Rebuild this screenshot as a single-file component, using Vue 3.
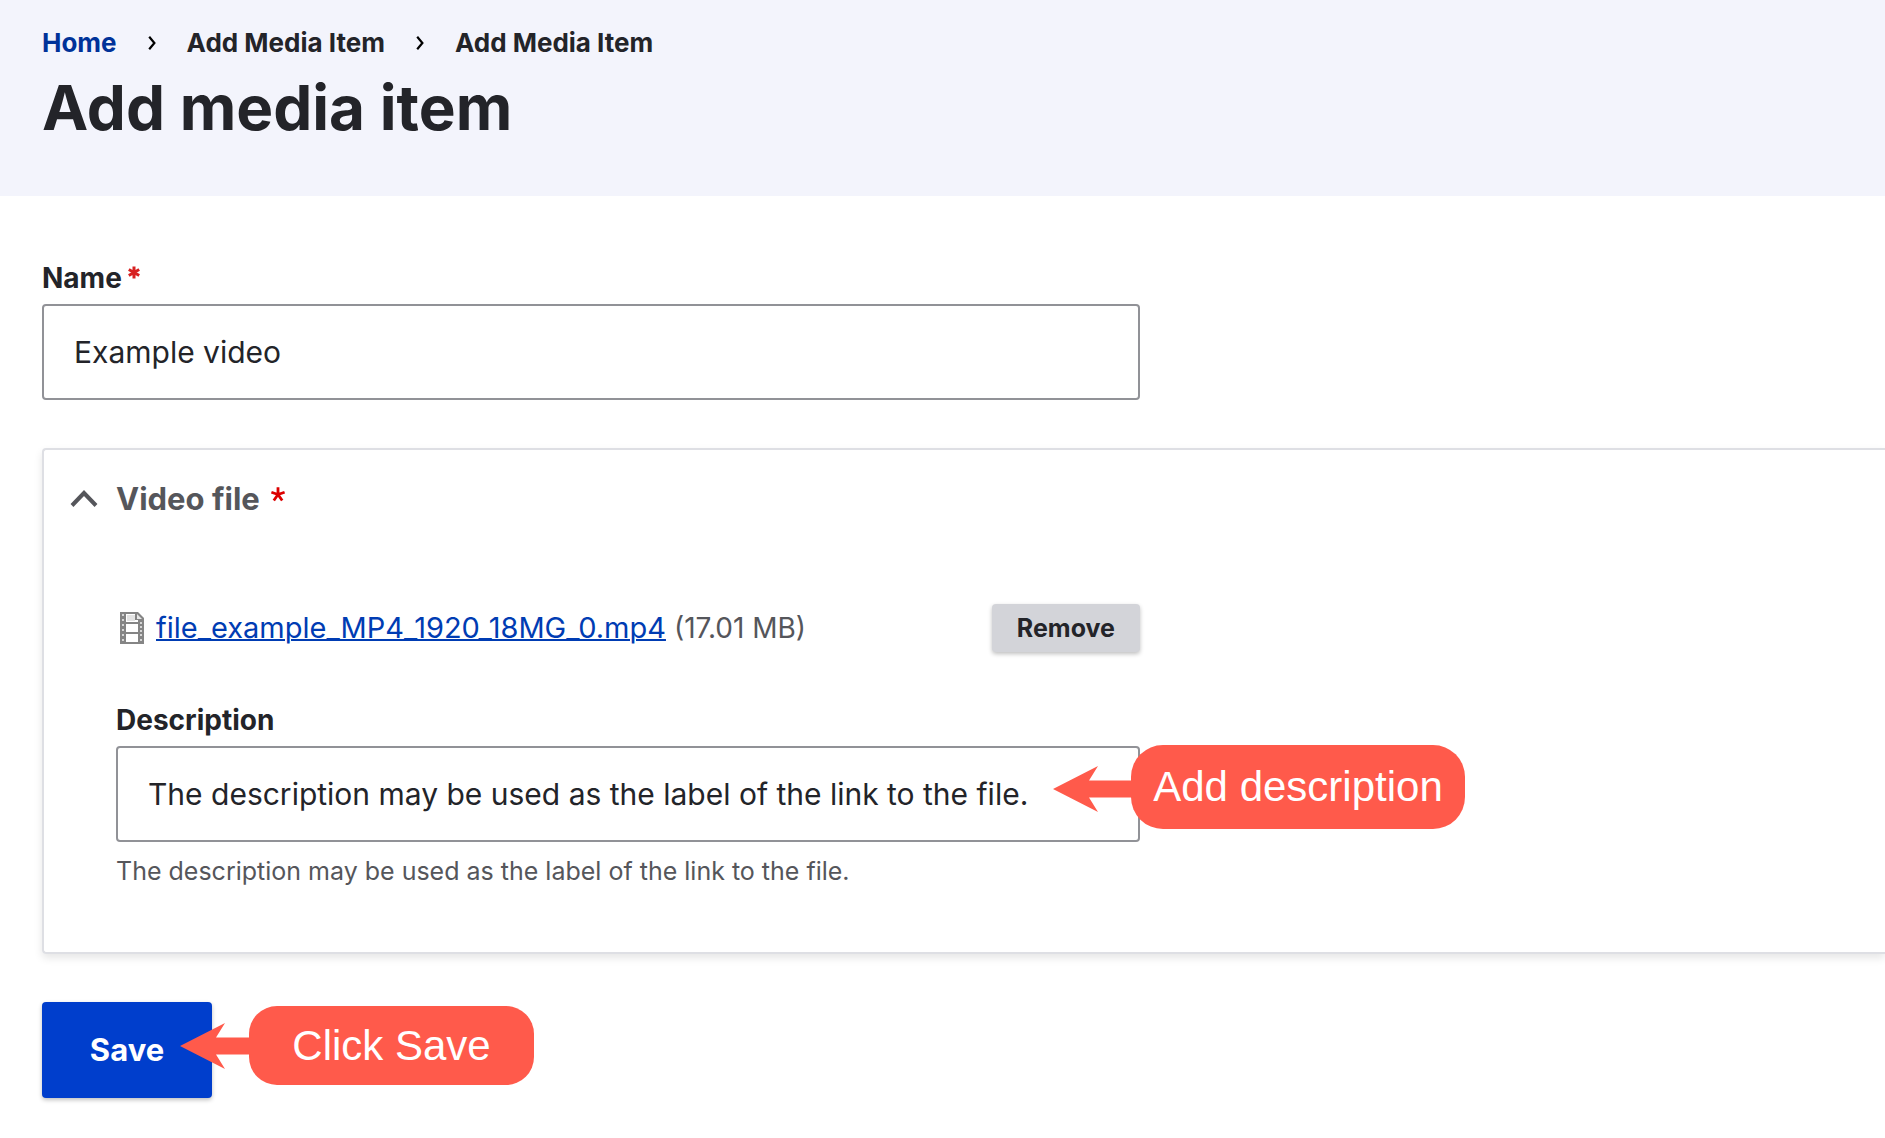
<script setup>
import { ref } from 'vue'

const crumbs = [
  { label: 'Home', href: '#home' },
  { label: 'Add Media Item' },
  { label: 'Add Media Item' },
]
const name = ref('Example video')
const description = ref('The description may be used as the label of the link to the file.')
const open = ref(true)
</script>

<template>
  <div class="page">
    <header class="header">
      <nav aria-label="Breadcrumb">
        <ol class="crumbs">
          <li v-for="(c, i) in crumbs" :key="i" class="crumb">
            <svg v-if="i" class="crumb-sep" width="8" height="14" viewBox="0 0 8 14" aria-hidden="true">
              <path d="M1.2 .8 6.400 7l-5.200 6.200" fill="none" stroke="#000" stroke-width="2.200" />
            </svg>
            <a v-if="c.href" class="crumb-link" :href="c.href">{{ c.label }}</a>
            <span v-else>{{ c.label }}</span>
          </li>
        </ol>
      </nav>
      <h1 class="title">Add media item</h1>
    </header>

    <form class="form" @submit.prevent>
      <div class="field">
        <label class="label" for="name">Name<svg class="required" width="12" height="13" viewBox="0 0 12 13" aria-hidden="true">
            <path d="M6 .5v12M.8 3.5l10.4 6M.8 9.5l10.4-6" stroke="#d72222" stroke-width="3" />
          </svg></label>
        <input id="name" v-model="name" class="input" type="text" required />
      </div>

      <section class="panel">
        <button class="summary" type="button" :aria-expanded="open" @click="open = !open">
          <svg class="chevron" width="28" height="18" viewBox="0 0 28 18" aria-hidden="true">
            <path d="M2 15.5 14 3l12 12.5" fill="none" stroke="#55565b" stroke-width="4" />
          </svg>
          <span>Video file</span>
          <svg class="star" width="14" height="15" viewBox="0 0 14 15" aria-hidden="true">
            <path d="M7 7.5V.2M7 7.500.4 5.200M7 7.500 13.600 5.200M7 7.500 2.800 13.500M7 7.500 11.200 13.500" stroke="#dc0000" stroke-width="2.800" />
          </svg>
        </button>

        <div v-show="open" class="panel-body">
          <div class="file-row">
            <svg class="file-icon" width="24" height="32" viewBox="0 0 24 32" aria-hidden="true">
              <path d="M0 0h18l6 6v26H0z" fill="#858585" />
              <path d="M6 2h9v6h3v2H6zM6 12h12v8H6zM6 22h12v8H6z" fill="#fff" />
              <path d="M7 3h8v6H7z" fill="#e4e4e4" />
              <path d="M17 2v5h5z" fill="#e8e8e8" />
              <path d="M2 2h2v2H2zm0 5h2v2H2zm0 5h2v2H2zm0 5h2v2H2zm0 5h2v2H2zm0 5h2v2H2zM20 10h2v2h-2zm0 4h2v2h-2zm0 4h2v2h-2zm0 4h2v2h-2zm0 5h2v2h-2z" fill="#d6d6d6" />
            </svg>
            <a class="file-link" href="#file">file_example_MP4_1920_18MG_0.mp4</a>
            <span class="file-size">(17.01 MB)</span>
            <button class="remove" type="button">Remove</button>
          </div>

          <label class="label" for="description">Description</label>
          <div class="anchor">
            <input id="description" v-model="description" class="input" type="text" aria-describedby="description-help" />
            <div class="callout callout-description">
              <svg class="arrow" width="82" height="46" viewBox="0 0 82 46" aria-hidden="true">
                <path d="M0 23 45 0 36 14.500H82v17H36L45 46z" fill="#ff5a4b" />
              </svg>
              Add description
            </div>
          </div>
          <p id="description-help" class="help">The description may be used as the label of the link to the file.</p>
        </div>
      </section>

      <div class="actions">
        <button class="save" type="submit">Save</button>
        <div class="callout callout-save">
          <svg class="arrow" width="73" height="46" viewBox="0 0 73 46" aria-hidden="true">
            <path d="M0 23 45 0 36 14.500H73v17H36L45 46z" fill="#ff5a4b" />
          </svg>
          Click Save
        </div>
      </div>
    </form>
  </div>
</template>

<style>
body {
  margin: 0;
  background: #fff;
  overflow-x: hidden;
}
</style>

<style scoped>
.page {
  font-family: Inter, "Liberation Sans", sans-serif;
  color: #232429;
}
.page *,
.page {
  box-sizing: border-box;
}
.header {
  background: #f3f4fc;
  padding: 24px 42px 48px;
}
.crumbs {
  display: flex;
  margin: 0;
  padding: 0;
  list-style: none;
  font-size: 26px;
  font-weight: 700;
  line-height: 38px;
}
.crumb {
  display: flex;
  align-items: center;
}
.crumb-sep {
  margin: 0 31px;
}
.crumb-link {
  color: #003299;
  text-decoration: none;
}
.title {
  margin: 6px 0 0;
  font-size: 62px;
  font-weight: 700;
  line-height: 80px;
}
.form {
  padding: 60px 0 40px 42px;
}
.field,
.panel-body {
  max-width: 1098px;
}
.label {
  display: block;
  font-size: 28px;
  font-weight: 700;
  line-height: 44px;
  margin-bottom: 4px;
}
.required {
  margin-left: 6px;
  vertical-align: 9px;
}
.input {
  display: block;
  width: 100%;
  height: 96px;
  padding: 0 30px;
  border: 2px solid #919297;
  border-radius: 4px;
  background: #fff;
  color: #232429;
  font: 400 30px/48px Inter, "Liberation Sans", sans-serif;
}
.panel {
  margin-top: 48px;
  border: 2px solid #dedfe4;
  border-right: 0;
  border-radius: 4px 0 0 4px;
  box-shadow: 0 4px 8px rgba(0, 0, 0, 0.1);
}
.summary {
  display: flex;
  align-items: center;
  width: 100%;
  padding: 25px 26px 23px;
  border: 0;
  background: none;
  color: #55565b;
  font: 700 31px/48px Inter, "Liberation Sans", sans-serif;
  text-align: left;
}
.chevron {
  margin-right: 18px;
}
.star {
  margin: 0 0 10px 11px;
}
.panel-body {
  padding: 58px 2px 60px 72px;
}
.file-row {
  display: flex;
  align-items: center;
  height: 48px;
  margin-bottom: 46px;
  padding-left: 4px;
  font-size: 28px;
  line-height: 42px;
}
.file-icon {
  margin-right: 12px;
}
.file-link {
  color: #003cb3;
  font-size: 29px;
  text-decoration-thickness: 2px;
}
.file-size {
  margin-left: 8px;
  color: #55565b;
}
.remove {
  margin-left: auto;
  height: 48px;
  padding: 0 25px;
  border: 0;
  border-radius: 4px;
  background: #d3d4d9;
  color: #232429;
  font: 700 25px/48px Inter, "Liberation Sans", sans-serif;
  box-shadow: 0 2px 4px rgba(0, 0, 0, 0.25);
}
.anchor,
.actions {
  position: relative;
}
.help {
  margin: 10px 0 0;
  color: #55565b;
  font-size: 25px;
  line-height: 38px;
}
.panel-body .help {
  padding-bottom: 2px;
}
.actions {
  display: flex;
  margin-top: 48px;
}
.save {
  width: 170px;
  height: 96px;
  border: 0;
  border-radius: 4px;
  background: #003ecc;
  color: #fff;
  font: 700 31px/48px Inter, "Liberation Sans", sans-serif;
  box-shadow: 0 2px 4px rgba(0, 0, 0, 0.25);
}
.callout {
  position: absolute;
  display: flex;
  align-items: center;
  justify-content: center;
  background: #ff5a4b;
  color: #fff;
  font-family: "Liberation Sans", Arial, sans-serif;
  font-size: 42px;
  white-space: nowrap;
}
.callout-description {
  left: calc(100% - 9px);
  top: -1px;
  width: 334px;
  height: 84px;
  border-radius: 32px;
}
.callout-save {
  left: 207px;
  top: 4px;
  width: 285px;
  height: 79px;
  border-radius: 28px;
}
.arrow {
  position: absolute;
  right: calc(100% - 4px);
}
.callout-description .arrow {
  top: 21px;
}
</style>
